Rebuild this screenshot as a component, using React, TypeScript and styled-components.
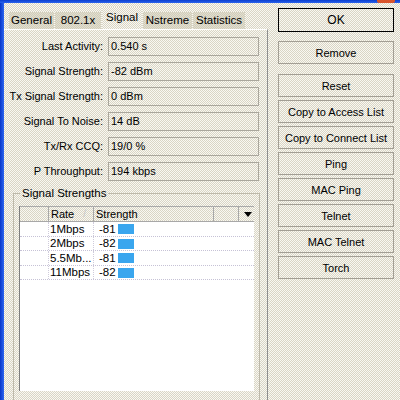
import React from 'react';
import styled, { createGlobalStyle } from 'styled-components';

const FONT = `"Liberation Sans Narrow", "Arial Narrow", "Liberation Sans", Arial, sans-serif`;
const dither = (a: string, b: string) =>
  `repeating-conic-gradient(${a} 0 25%, ${b} 0 50%) 0 0 / 2px 2px`;
const PANEL_BG = dither('#d9d5c5', '#f9f8f2');
const TAB_BG = dither('#d0ccba', '#e2dfcf');

const Global = createGlobalStyle`
  html, body { margin: 0; padding: 0; }
  body {
    width: 400px; height: 400px; overflow: hidden;
    font-family: ${FONT}; font-size: 11px; color: #000;
  }
`;

const Window = styled.div`
  width: 400px; height: 400px; display: flex; flex-direction: column;
  background: ${PANEL_BG}; overflow: hidden;
`;
const TitleEdge = styled.div`
  height: 3px; flex: none; display: flex; justify-content: flex-end; padding-right: 5px;
  background: linear-gradient(#0a3fd0, #2a62ec);
`;
const CloseRemnant = styled.div`
  width: 18px; height: 3px; background: #d9542c; border-radius: 0 0 2px 2px;
`;
const Body = styled.div`flex: 1; display: flex; min-height: 0;`;
const LeftEdge = styled.div`
  width: 4px; flex: none; background: linear-gradient(90deg, #0836c8, #2c66f0);
`;
const Main = styled.div`width: 264px; flex: none; display: flex; flex-direction: column;`;
const TabBar = styled.div`
  height: 26px; flex: none; display: flex; align-items: flex-end; gap: 1px; padding-left: 5px;
`;
const Tab = styled.div<{ $w: number; $active?: boolean }>`
  width: ${p => p.$w}px; box-sizing: border-box;
  height: ${p => (p.$active ? 22 : 17)}px;
  padding-top: ${p => (p.$active ? 4 : 2)}px;
  background: ${p => (p.$active ? PANEL_BG : TAB_BG)};
  text-align: center; line-height: 13px; white-space: nowrap; font-size: 11.5px;
`;
const Panel = styled.div`
  flex: 1; border-top: 1px solid #fff; border-right: 1px solid #8e8e8e;
  padding-top: 7px; display: flex; flex-direction: column; min-height: 0;
`;
const Form = styled.div`
  display: grid; grid-template-columns: 99px 151px; column-gap: 5px; row-gap: 6px;
`;
const Label = styled.div`text-align: right; line-height: 19px; white-space: nowrap;`;
const Field = styled.div`
  height: 19px; box-sizing: border-box; border: 1px solid #a9a69c;
  background: ${PANEL_BG}; padding-left: 2px; line-height: 17px; white-space: nowrap;
`;
const Group = styled.fieldset`
  margin: 5px 0 0 9px; width: 247px; box-sizing: border-box;
  border: 1px solid #bdb9aa; border-bottom: none;
  padding: 5px 4px 0 5px; flex: 1; min-height: 0; min-inline-size: 0;
`;
const Legend = styled.legend`padding: 0 2px; margin-left: 1px; line-height: 15px; font-size: 11.5px;`;
const Table = styled.div`
  width: 235px; height: 185px; box-sizing: border-box; border-left: 1px solid #7e7e7e;
  display: flex; flex-direction: column; background: #fff;
`;
const COLS = '28px 45px 120px 25px 16px';
const Header = styled.div`
  display: grid; grid-template-columns: ${COLS}; height: 16px; box-sizing: border-box;
  border-top: 1px solid #a8a8a8; border-bottom: 1px solid #a8a8a8; background: ${PANEL_BG};
`;
const HeadCell = styled.div<{ $first?: boolean }>`
  border-left: ${p => (p.$first ? 'none' : '1px solid #a8a8a8')};
  padding-left: 2px; line-height: 14px; white-space: nowrap; display: flex; align-items: center;
`;
const SortMark = styled.span`color: #c8c8c8; margin-left: 9px; font-size: 10px;`;
const Arrow = styled.span`
  width: 0; height: 0; margin-left: 3px;
  border-left: 4px solid transparent; border-right: 4px solid transparent; border-top: 5px solid #000;
`;
const Rows = styled.div`flex: 1; display: flex; flex-direction: column;`;
const Row = styled.div`
  display: grid; grid-template-columns: ${COLS}; height: 15px; box-sizing: border-box;
  border-bottom: 1px dotted #c6c2d6;
  &:nth-child(even) { height: 14px; }
`;
const Cell = styled.div<{ $first?: boolean; $pad?: number }>`
  border-left: ${p => (p.$first ? 'none' : '1px dotted #cfcbdb')};
  padding-left: ${p => p.$pad ?? 1}px; white-space: nowrap; overflow: hidden;
  display: flex; align-items: center; line-height: 13px; font-size: 11.5px;
`;
const Plain = styled.div``;
const Value = styled.span`width: 19px; flex: none;`;
const Bar = styled.span`width: 16px; height: 10px; background: #3aa6ee; flex: none;`;

const Buttons = styled.div`
  margin-left: 10px; padding-top: 5px; width: 116px; display: flex; flex-direction: column; gap: 3px;
`;
const Button = styled.div<{ $default?: boolean; $space?: number }>`
  height: ${p => (p.$default ? 24 : 23)}px; box-sizing: border-box;
  border: 1px solid ${p => (p.$default ? '#000' : '#a29e94')};
  margin-bottom: ${p => p.$space ?? 0}px;
  background: ${PANEL_BG}; display: flex; align-items: center; justify-content: center;
  white-space: nowrap; font-size: ${p => (p.$default ? 12 : 11)}px;
`;

const tabs = [
  { t: 'General', w: 45 },
  { t: '802.1x', w: 46 },
  { t: 'Signal', w: 40, a: true },
  { t: 'Nstreme', w: 49 },
  { t: 'Statistics', w: 52 },
];
const fields = [
  ['Last Activity:', '0.540 s'],
  ['Signal Strength:', '-82 dBm'],
  ['Tx Signal Strength:', '0 dBm'],
  ['Signal To Noise:', '14 dB'],
  ['Tx/Rx CCQ:', '19/0 %'],
  ['P Throughput:', '194 kbps'],
];
const rates = [
  ['1Mbps', '-81'],
  ['2Mbps', '-82'],
  ['5.5Mb...', '-81'],
  ['11Mbps', '-82'],
];
const buttons: { t: string; d?: boolean; s?: number }[] = [
  { t: 'OK', d: true, s: 6 },
  { t: 'Remove', s: 7 },
  { t: 'Reset' },
  { t: 'Copy to Access List' },
  { t: 'Copy to Connect List' },
  { t: 'Ping' },
  { t: 'MAC Ping' },
  { t: 'Telnet' },
  { t: 'MAC Telnet' },
  { t: 'Torch' },
];

export default function App() {
  return (
    <>
      <Global />
      <Window>
        <TitleEdge>
          <CloseRemnant />
        </TitleEdge>
        <Body>
          <LeftEdge />
          <Main>
            <TabBar>
              {tabs.map(t => (
                <Tab key={t.t} $w={t.w} $active={t.a}>{t.t}</Tab>
              ))}
            </TabBar>
            <Panel>
              <Form>
                {fields.map(([l, v]) => (
                  <React.Fragment key={l}>
                    <Label>{l}</Label>
                    <Field>{v}</Field>
                  </React.Fragment>
                ))}
              </Form>
              <Group>
                <Legend>Signal Strengths</Legend>
                <Table>
                  <Header>
                    <HeadCell $first />
                    <HeadCell>Rate<SortMark>/</SortMark></HeadCell>
                    <HeadCell>Strength</HeadCell>
                    <HeadCell />
                    <HeadCell><Arrow /></HeadCell>
                  </Header>
                  <Rows>
                    {rates.map(([r, s]) => (
                      <Row key={r}>
                        <Cell $first />
                        <Cell $pad={1}>{r}</Cell>
                        <Cell $pad={5}><Value>{s}</Value><Bar /></Cell>
                        <Plain />
                        <Plain />
                      </Row>
                    ))}
                  </Rows>
                </Table>
              </Group>
            </Panel>
          </Main>
          <Buttons>
            {buttons.map(b => (
              <Button key={b.t} $default={b.d} $space={b.s}>{b.t}</Button>
            ))}
          </Buttons>
        </Body>
      </Window>
    </>
  );
}
